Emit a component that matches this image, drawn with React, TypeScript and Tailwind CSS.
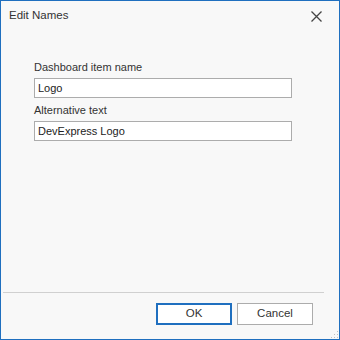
import React from 'react';

const font = { fontFamily: '"Liberation Sans", Arial, sans-serif' };

const Field = ({ label, value, className }: { label: string; value: string; className?: string }) => (
    <div className={className}>
        <div className="h-4 leading-4 text-[11px] text-[#333]">{label}</div>
        <div className="mt-[3px] h-5 border border-[#acacac] bg-white px-[3px] text-[11px] leading-[18px] text-[#222]">
            {value}
        </div>
    </div>
);

export default function App() {
    return (
        <div
            className="relative w-[340px] h-[340px] border border-[#1f6fbf] bg-[#f8f8f8] flex flex-col select-none"
            style={font}
        >
            {/* Title bar */}
            <div className="h-[30px] flex items-center justify-between pl-2 pr-[17px]">
                <span className="text-[11.5px] text-[#333]">Edit Names</span>
                <svg width="11" height="11" viewBox="0 0 11 11">
                    <path d="M0.5 0.5 L10.5 10.5 M10.5 0.5 L0.5 10.5" stroke="#444" strokeWidth="1.3" />
                </svg>
            </div>

            {/* Fields */}
            <div className="pt-[28px] pl-[33px] pr-[47px]">
                <Field label="Dashboard item name" value="Logo" />
                <Field label="Alternative text" value="DevExpress Logo" className="mt-1" />
            </div>

            <div className="flex-1" />

            <div className="ml-[2px] w-[321px] h-px bg-[#d0d0d0]" />

            {/* Buttons */}
            <div className="mt-[10px] pb-[14px] pr-[26px] flex justify-end gap-[5px]">
                <button className="w-[76px] h-[22px] border-2 border-[#1f6fbf] bg-white text-[11.5px] text-[#333]">
                    OK
                </button>
                <button className="w-[76px] h-[22px] border border-[#acacac] bg-white text-[11.5px] text-[#333]">
                    Cancel
                </button>
            </div>

            {/* Size grip */}
            <svg className="absolute right-0 bottom-0" width="8" height="8" viewBox="0 0 8 8">
                <rect x="6" y="0" width="1" height="1" fill="#c0c0c0" />
                <rect x="3" y="3" width="1" height="1" fill="#c0c0c0" />
                <rect x="6" y="3" width="1" height="1" fill="#c0c0c0" />
                <rect x="0" y="6" width="1" height="1" fill="#c0c0c0" />
                <rect x="3" y="6" width="1" height="1" fill="#c0c0c0" />
                <rect x="6" y="6" width="1" height="1" fill="#c0c0c0" />
            </svg>
        </div>
    );
}
